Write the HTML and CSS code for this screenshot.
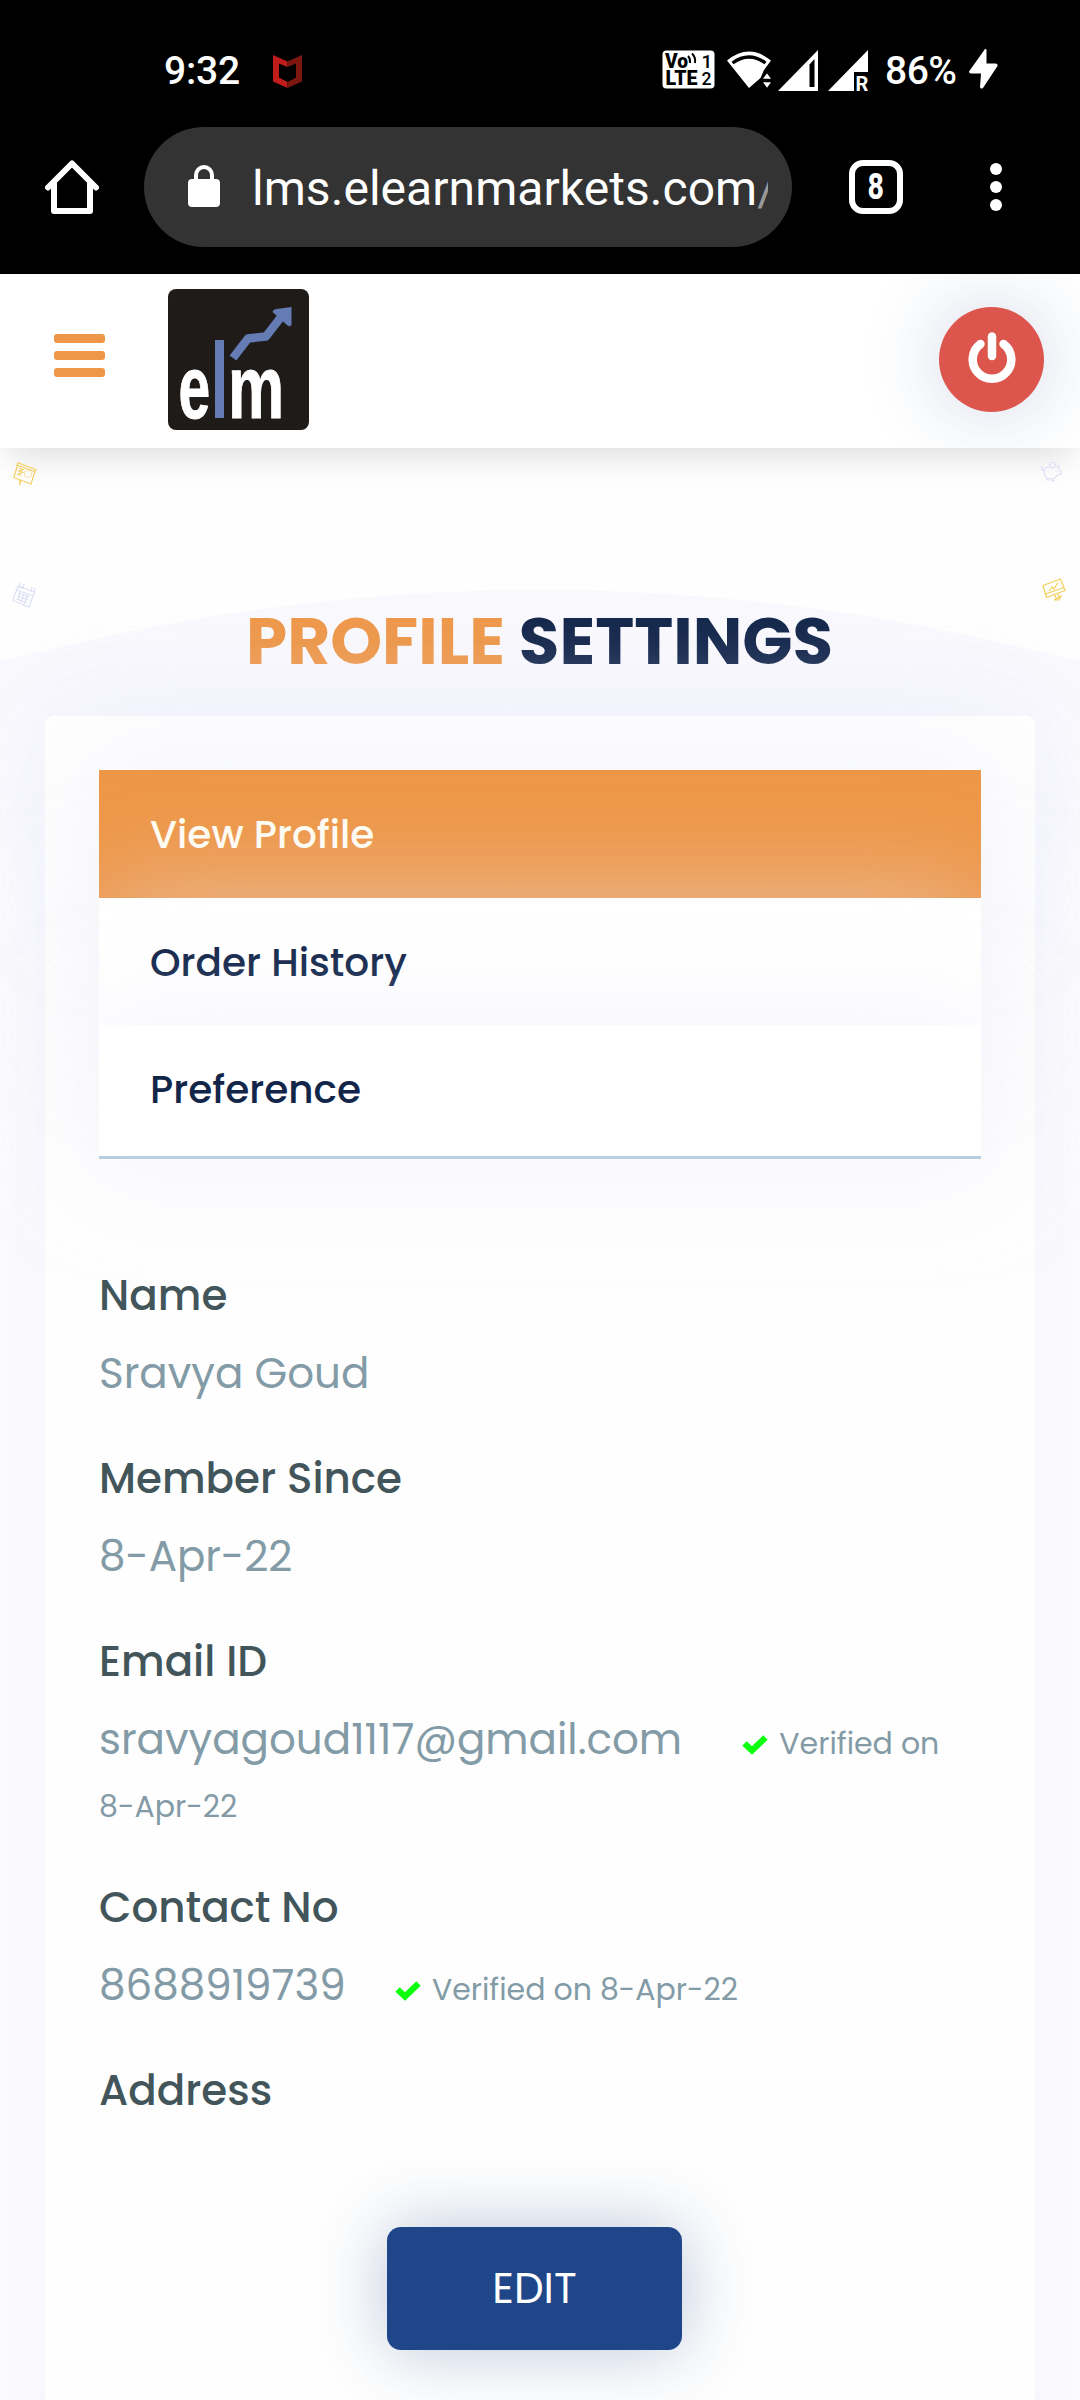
FILE: index.html
```html
<!DOCTYPE html>
<html lang="en">
<head>
<meta charset="utf-8">
<title>Profile Settings</title>
<link rel="stylesheet" href="styles.css">
</head>
<body>
<div class="chrome">
  <div class="status">
    <span class="time">9:32</span>
    <svg class="shield" width="29" height="33" viewBox="0 0 29 33"><path d="M0 0L14.5 6.500V12L6 8.500V22.500L14.500 27V33L0 26.500Z" fill="#c01c1c"/><path d="M29 0L14.500 6.500V12L23 8.500V22.500L14.500 27V33L29 26.500Z" fill="#7b170f"/></svg>
    <svg class="volte" width="53" height="39" viewBox="0 0 53 39"><rect x=".5" y=".5" width="52" height="38" rx="4" fill="#fff"/><g font-family="Roboto, sans-serif" fill="#000"><text x="3" y="17.500" font-size="20" font-weight="900" textLength="23" lengthAdjust="spacingAndGlyphs">Vo</text><text x="3.500" y="35" font-size="21" font-weight="900" textLength="32" lengthAdjust="spacingAndGlyphs">LTE</text><text x="39.500" y="17.500" font-size="19" font-weight="500">1</text><text x="39.500" y="35" font-size="19" font-weight="500" textLength="10" lengthAdjust="spacingAndGlyphs">2</text></g><path d="M26 6Q28.500 8.500 28 13M30 3.500Q34 7.500 33 13" stroke="#000" stroke-width="1.900" fill="none"/></svg>
    <svg class="wifi" width="45" height="37" viewBox="0 0 45 37"><path d="M0 9.500Q22 -8.500 44 9.500L37 19L33.500 27L22 37Z" fill="#fff"/><path d="M5.500 12Q22 0 38.500 12" stroke="#000" stroke-width="3.400" fill="none"/><path d="M34.500 28.500L40 21L45.500 28.500ZM34.500 30.500H45.500L40 38Z" fill="#fff" stroke="#000" stroke-width="1.500"/></svg>
    <svg class="sig1" width="40" height="41" viewBox="0 0 40 41"><path d="M0 41L40 0V41Z" fill="#fff"/><path d="M31.500 14.500L36.500 9V37H31.500Z" fill="#000"/></svg>
    <svg class="sig2" width="42" height="41" viewBox="0 0 42 41"><path d="M0 41L40 0V22H26V41Z" fill="#fff"/><text x="27.500" y="40.500" font-family="Roboto, sans-serif" font-weight="700" font-size="20" fill="#fff">R</text></svg>
    <span class="battery">86%</span>
    <svg class="bolt" width="29" height="40" viewBox="0 0 29 40"><path d="M16 0L0 22.500Q0 24.500 2 24.500H12L11 38Q11.500 40.500 14 39L28.500 17Q29 14.500 26.500 14.500H17.500V1.500Q17.500 -.5 16 0Z" fill="#fff"/></svg>
  </div>
  <div class="toolbar">
    <svg class="home" width="54" height="54" viewBox="0 0 54 54" fill="none" stroke="#fff" stroke-width="6" stroke-linecap="round" stroke-linejoin="round"><path d="M3 27.500L27 3.500L51 27.500"/><path d="M9 23V51H45V23"/></svg>
    <div class="url">
      <svg width="32" height="42" viewBox="0 0 32 42"><rect y="14" width="32" height="28" rx="4" fill="#fff"/><path d="M8 16V10A8 8 0 0 1 24 10V16" fill="none" stroke="#fff" stroke-width="4"/></svg>
      <span class="host">lms.elearnmarkets.com<i>/</i></span>
    </div>
    <div class="tabs"><span>8</span></div>
    <svg class="dots" width="12" height="48" viewBox="0 0 12 48" fill="#fff"><circle cx="6" cy="6" r="6"/><circle cx="6" cy="24" r="6"/><circle cx="6" cy="42" r="6"/></svg>
  </div>
</div>

<header class="header">
  <div class="burger"><b></b><b></b><b></b></div>
  <svg class="logo" width="141" height="141" viewBox="0 0 141 141"><rect width="141" height="141" rx="8" fill="#1f1b18"/><rect x="47" y="51" width="9" height="78" fill="#647bb3"/><path d="M65 69L80 49.500L98 47.500L113 28" fill="none" stroke="#647bb3" stroke-width="8.500" stroke-linejoin="round"/><path d="M104.500 23Q105 20.500 108 20L123.500 18V36Q122 38 119.500 36.500Z" fill="#647bb3"/><g font-family="'Liberation Sans', sans-serif" font-weight="700" font-size="89" fill="#fff" stroke="#fff" stroke-width="1"><text transform="translate(10.500 129) scale(.64 1)">e</text><text transform="translate(60 129) scale(.71 1)">m</text></g></svg>
  <div class="power"><svg width="48" height="52" viewBox="0 0 48 52" fill="none" stroke="#fff" stroke-width="8.500" stroke-linecap="round"><path d="M24 4.500V24"/><path d="M12.500 12A19.300 19.300 0 1 0 35.500 12"/></svg></div>
</header>

<main class="page">
  <svg class="arc" width="1080" height="360" viewBox="0 0 1080 360"><defs><linearGradient id="g" x1="0" y1="0" x2="0" y2="1"><stop offset="0" stop-color="#f8f8fd"/><stop offset="1" stop-color="#fefeff"/></linearGradient></defs><path d="M0 72Q270 0 540 0T1080 72V360H0Z" fill="url(#g)"/></svg>
  <svg class="deco d1" width="24" height="24" viewBox="0 0 24 24" fill="none" stroke="#f3cf62" stroke-width="1.200"><path d="M5 .8L23 7.500L22 9.500L4 3ZM4.500 3.500L.8 15.500L18 22L22 9.500"/><path d="M6 6L10 7.500L6 9L9.500 10.500L5 12L8 13.500M8 18L6.500 23M6.800 18V23"/><circle cx="15" cy="12" r="3.500" stroke="#f5e6b4"/></svg>
  <svg class="deco d2" width="24" height="26" viewBox="0 0 24 26" fill="none" stroke="#dde0f5" stroke-width="1.200"><path d="M6 4L22.500 10L17 25L.8 18.500ZM5 8L21 14M8 1L7 6M12 2L10.500 7M20 5L19 10M23 6L22 11M6.500 11L17 15M5.500 14L16 18M4.500 17L15 21M8 10L6 18M12 12L9 20M16 13L12 22"/></svg>
  <svg class="deco d3" width="21" height="20" viewBox="0 0 21 20" fill="none" stroke="#dde0f5" stroke-width="1.200"><circle cx="11.500" cy="3" r="2.800"/><path d="M8 5Q3 5 3 10Q3 14 6 15.500V18H8V16.500H11V19H13V16L17 13L20 12V9L18 8V3.500L15 5.500M1 4Q-.5 8 3 9M15 9V10"/></svg>
  <svg class="deco d4" width="24" height="24" viewBox="0 0 24 24" fill="none" stroke="#f4cf5a" stroke-width="1.200"><path d="M1 7.500L18.500 1L23 12.500L4.500 19.500ZM3.500 16L22 9.500M7 13L10 9L12 11L16 4.500M13 17L14 20M16 16L17 19M12 22L19 18.500L17 22Z"/></svg>
  <h1 class="title"><em>PROFILE</em> SETTINGS</h1>
  <section class="card">
    <nav class="menu">
      <a class="item active">View Profile</a>
      <a class="item">Order History</a>
      <a class="item last">Preference</a>
    </nav>
    <dl class="fields">
      <div><dt>Name</dt><dd>Sravya Goud</dd></div>
      <div><dt>Member Since</dt><dd>8-Apr-22</dd></div>
      <div><dt>Email ID</dt><dd>sravyagoud1117@gmail.com <small class="s1"><svg class="check" viewBox="0 0 26 19"><path d="M2.500 8.500L10 15.500L23.500 2.500"/></svg>Verified on<br>8-Apr-22</small></dd></div>
      <div><dt>Contact No</dt><dd>8688919739 <small class="s2"><svg class="check" viewBox="0 0 26 19"><path d="M2.500 8.500L10 15.500L23.500 2.500"/></svg>Verified on 8-Apr-22</small></dd></div>
      <div><dt>Address</dt></div>
    </dl>
    <button class="edit">EDIT</button>
  </section>
</main>
</body>
</html>
```
FILE: styles.css
```css
* { box-sizing: border-box; }
html, body { margin: 0; }
body {
  width: 1080px;
  height: 2400px;
  overflow: hidden;
  background: #fefefe;
  font-family: Poppins, Inter, sans-serif;
}
svg { display: block; flex: none; }

/* browser chrome */
.chrome { height: 274px; background: #000; color: #fff; font-family: Roboto, sans-serif; }
.status { height: 127px; padding: 49px 0 0 164px; display: flex; align-items: flex-start; }
.time, .battery { margin-top: 1px; font-size: 39px; font-weight: 500; line-height: 42px; white-space: nowrap; }
.time { width: 109px; letter-spacing: -.2px; }
.shield { margin: 6px 360px 0 0; }
.volte { margin: 1px 12px 0 0; }
.wifi { margin: 2px 6px 0 0; }
.sig1 { margin: 1px 10px 0 0; }
.sig2 { margin: 1px 15px 0 0; }
.battery { width: 84px; letter-spacing: -.5px; }
.toolbar { height: 120px; padding-left: 45px; display: flex; align-items: center; }
.url {
  width: 648px;
  height: 120px;
  margin-left: 45px;
  padding: 0 24px 0 44px;
  border-radius: 60px;
  background: #333;
  display: flex;
  align-items: center;
  gap: 32px;
}
.url svg { margin-top: -3px; }
.host { flex: 1; overflow: hidden; white-space: nowrap; font-size: 48px; letter-spacing: .05px; line-height: 60px; padding-top: 3px; }
.host i { font-style: normal; color: #999; }
.tabs {
  width: 54px;
  height: 54px;
  margin-left: 57px;
  border: 6px solid #fff;
  border-radius: 14px;
  display: flex;
  align-items: center;
  justify-content: center;
  font-size: 37px;
  font-weight: 800;
}
.tabs span { transform: scaleX(.77); line-height: 42px; }
.dots { margin-left: 87px; }

/* site header */
.header {
  position: relative;
  z-index: 2;
  height: 174px;
  padding: 15px 36px 0 54px;
  background: #fff;
  box-shadow: 0 16px 32px -8px rgba(0, 0, 0, .13);
  display: flex;
  align-items: flex-start;
}
.burger { width: 51px; margin: 45px 63px 0 0; display: flex; flex-direction: column; gap: 8px; }
.burger b { height: 9px; border-radius: 3px; background: #ee9748; }
.power {
  width: 105px;
  height: 105px;
  margin: 18px 0 0 auto;
  border-radius: 50%;
  background: #dd564d;
  box-shadow: 0 0 80px rgba(30, 70, 135, .22);
  clip-path: inset(-33px -36px -36px -80px);
  display: flex;
  justify-content: center;
  align-items: flex-start;
  padding-top: 25px;
}

/* page */
.page { position: relative; height: 1952px; padding: 155px 45px 0; }
.arc { position: absolute; left: 0; top: 142px; }
.deco { position: absolute; z-index: 3; }
.d1 { left: 13px; top: 14px; }
.d2 { left: 12px; top: 134px; }
.d3 { left: 1041px; top: 14px; }
.d4 { left: 1042px; top: 130px; }
.title {
  position: relative;
  margin: 0;
  height: 113px;
  padding-left: 201px;
  font-size: 66px;
  font-weight: 700;
  line-height: 76px;
  white-space: nowrap;
  color: #12264a;
}
.title em { font-style: normal; color: #ee9748; }
.card {
  position: relative;
  height: 1800px;
  padding: 54px 54px 0;
  border-radius: 8px;
  background: #fefefe;
  box-shadow: 0 0 110px rgba(231, 232, 252, .6);
}
.item {
  position: relative;
  display: block;
  height: 127.500px;
  padding-left: 51px;
  background: #fff;
  box-shadow: 0 0 110px rgba(231, 233, 251, .5);
  font-size: 39px;
  font-weight: 500;
  line-height: 129px;
  color: #12264a;
}
.item.active { background: #ee9748; color: #fffdf2; }
.item.last { height: 134px; border-bottom: 3px solid #b9cde2; }

.fields { position: relative; margin: 105px 0 0; display: flex; flex-direction: column; gap: 42px; }
.fields dt, .fields dd { margin: 0; font-size: 42px; line-height: 63px; white-space: nowrap; }
.fields dt { font-weight: 500; color: #42555a; }
.fields dd { margin-top: 15px; color: #839ba6; }
.fields small { font-size: 30px; line-height: 1; }
.check { display: inline-block; width: 26px; height: 19px; margin-right: 11px; fill: none; stroke: #0bff0b; stroke-width: 6.300px; overflow: visible; }
.s1 { margin-left: 49px; }
.s2 { margin-left: 38px; }

.edit {
  position: relative;
  display: block;
  width: 295px;
  height: 123px;
  margin: 105px 0 0 288px;
  padding: 0;
  border: 0;
  border-radius: 14px;
  background: #1e4688;
  box-shadow: 0 0 68px rgba(30, 70, 136, .3);
  color: #fff;
  font: 400 42px/123px Poppins, Inter, sans-serif;
}
```
